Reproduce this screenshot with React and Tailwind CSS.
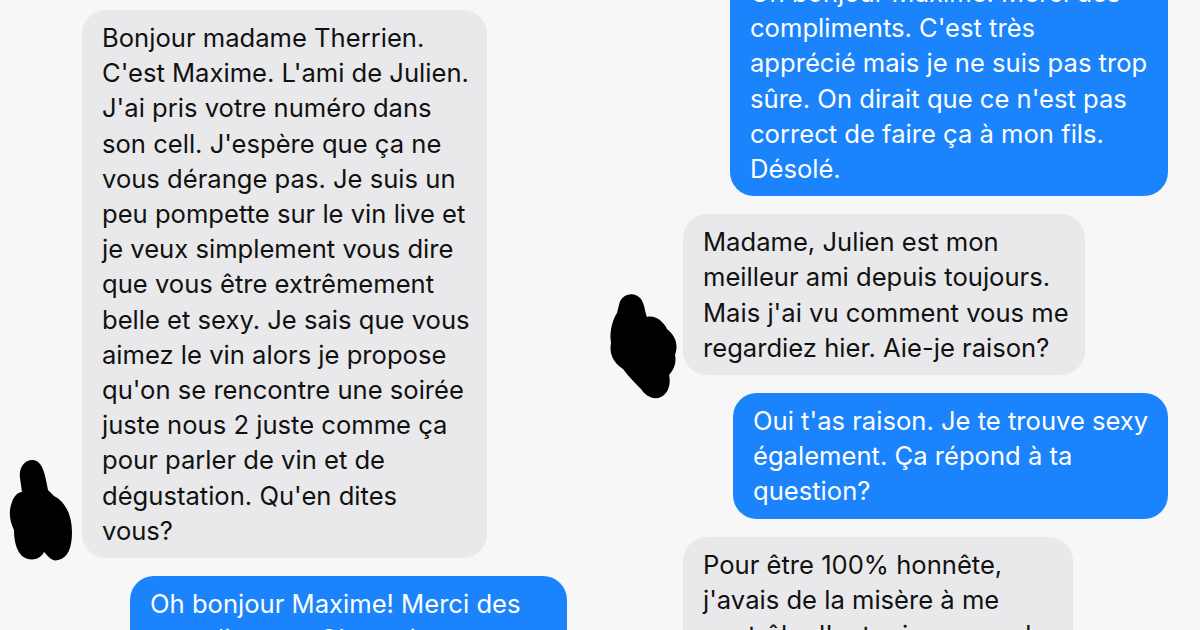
import React from "react";

const font = { fontFamily: "Inter, 'Noto Sans', sans-serif" };

const Bubble = ({ lines, blue, className = "" }) => (
  <div
    className={
      "rounded-[24px] px-5 py-[10px] text-[25.6px] leading-[35.2px] tracking-[0px] " +
      (blue ? "bg-[#1b84fc] text-white " : "bg-[#e9e9eb] text-[#111111] ") +
      className
    }
  >
    {lines.map((l, i) => (
      <div key={i} className="whitespace-nowrap">
        {l}
      </div>
    ))}
  </div>
);

// black scribbles hiding the avatars
const ScribbleLeft = () => (
  <svg width="72" height="110" viewBox="0 0 72 110" className="shrink-0">
    <g fill="#000">
      <path d="M18 22 C16 8 28 0 36 6 C42 10 44 24 46 34 L52 40 C64 46 70 60 70 76 C70 92 66 102 56 104 C50 106 46 100 42 96 C38 104 28 106 20 100 C14 94 12 84 12 74 C8 66 6 56 10 46 C12 40 16 36 20 36 Z" />
    </g>
  </svg>
);

const ScribbleRight = () => (
  <svg width="76" height="110" viewBox="0 0 76 110" className="shrink-0">
    <g fill="#000">
      <path d="M14 14 C16 2 30 0 36 8 C40 14 40 22 42 26 C50 24 58 30 62 38 C70 44 74 54 70 64 C72 72 68 80 64 84 C66 92 64 102 56 106 C48 110 40 104 36 98 C30 92 24 86 18 78 C8 72 4 62 6 52 C4 40 8 28 12 22 Z" />
    </g>
  </svg>
);

export default function App() {
  return (
    <div
      className="w-[1200px] h-[630px] overflow-hidden bg-[#f7f7f7] flex"
      style={font}
    >
      {/* left column */}
      <div className="w-[600px] flex flex-col pt-[10px] gap-[18px]">
        <div className="flex items-end">
          <div className="w-[82px] flex justify-start pl-[2px] -mb-[8px]">
            <ScribbleLeft />
          </div>
          <Bubble
            className="w-[405px]"
            lines={[
              "Bonjour madame Therrien.",
              "C'est Maxime. L'ami de Julien.",
              "J'ai pris votre numéro dans",
              "son cell. J'espère que ça ne",
              "vous dérange pas. Je suis un",
              "peu pompette sur le vin live et",
              "je veux simplement vous dire",
              "que vous être extrêmement",
              "belle et sexy. Je sais que vous",
              "aimez le vin alors je propose",
              "qu'on se rencontre une soirée",
              "juste nous 2 juste comme ça",
              "pour parler de vin et de",
              "dégustation. Qu'en dites",
              "vous?",
            ]}
          />
        </div>
        <Bubble
          blue
          className="w-[437px] ml-[130px]"
          lines={[
            "Oh bonjour Maxime! Merci des",
            "compliments. C'est très",
            "apprécié mais je ne suis pas trop",
          ]}
        />
      </div>

      {/* right column */}
      <div className="w-[600px] flex flex-col -mt-[35px] gap-[18px]">
        <Bubble
          blue
          className="w-[438px] ml-[130px]"
          lines={[
            "Oh bonjour Maxime! Merci des",
            "compliments. C'est très",
            "apprécié mais je ne suis pas trop",
            "sûre. On dirait que ce n'est pas",
            "correct de faire ça à mon fils.",
            "Désolé.",
          ]}
        />
        <div className="flex items-end">
          <div className="w-[83px] flex justify-start pl-[5px] -mb-[26px]">
            <ScribbleRight />
          </div>
          <Bubble
            className="w-[402px]"
            lines={[
              "Madame, Julien est mon",
              "meilleur ami depuis toujours.",
              "Mais j'ai vu comment vous me",
              "regardiez hier. Aie-je raison?",
            ]}
          />
        </div>
        <Bubble
          blue
          className="w-[435px] ml-[133px]"
          lines={[
            "Oui t'as raison. Je te trouve sexy",
            "également. Ça répond à ta",
            "question?",
          ]}
        />
        <Bubble
          className="w-[390px] ml-[83px]"
          lines={[
            "Pour être 100% honnête,",
            "j'avais de la misère à me",
            "contrôler l'autre jour quand",
            "tu es venu à la maison.",
          ]}
        />
      </div>
    </div>
  );
}
